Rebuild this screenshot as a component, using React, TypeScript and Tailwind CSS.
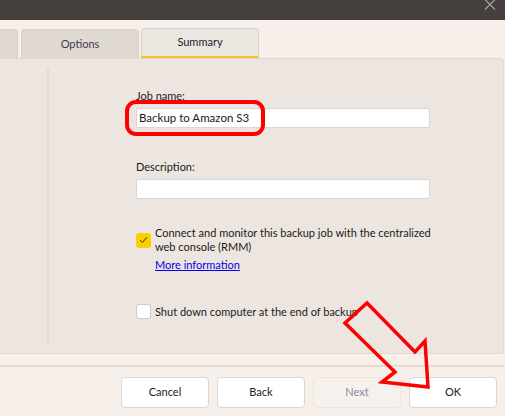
import React from 'react';

const font = { fontFamily: 'Lato, "Noto Sans", sans-serif' };

function Tab({ label, active, className }: { label: string; active?: boolean; className: string }) {
  return (
    <div
      className={`${className} flex items-center justify-center rounded-t-[4px] border border-b-0 text-[11px] ${
        active
          ? 'h-[30px] border-[#d8d2cc] bg-[#ece6e0] text-[#1c1b2e] border-b-2 border-b-[#f5c518]'
          : 'h-[29px] border-[#d6d0ca] bg-[#e0d9d1] text-[#3e3d52]'
      }`}
    >
      {label}
    </div>
  );
}

function Button({ label, disabled }: { label: string; disabled?: boolean }) {
  return (
    <button
      className={`w-[88px] h-[31px] rounded-[4px] border text-[11px] ${
        disabled
          ? 'bg-[#f6f1ec] border-[#ebe6e1] text-[#8b8a9a]'
          : 'bg-white border-[#dcd7d2] text-[#1a1a1a]'
      }`}
    >
      {label}
    </button>
  );
}

export default function App() {
  return (
    <div className="relative w-[505px] h-[416px] overflow-hidden bg-[#f7f0ea] text-[#1a1a1a] flex flex-col" style={font}>
      {/* title bar */}
      <div className="h-[20px] bg-[#45403d] flex justify-end items-start shrink-0">
        <svg width="12" height="11" viewBox="0 0 12 11" className="mr-[9px] -mt-[1px]">
          <path d="M1 0.5 L11 10.5 M11 0.5 L1 10.5" stroke="#a8a4a1" strokeWidth="1.2" />
        </svg>
      </div>

      {/* tabs */}
      <div className="mt-[8px] h-[30px] flex items-end shrink-0">
        <Tab label="" className="w-[18px] border-l-0 rounded-tl-none" />
        <Tab label="Options" className="w-[118px] ml-[3px]" />
        <Tab label="Summary" className="w-[118px] ml-[2px]" active />
      </div>

      {/* panel */}
      <div className="w-[504px] h-[296px] bg-[#ede6e0] border border-l-0 border-[#e0dad4] rounded-r-[4px] flex shrink-0">
        <div className="w-[47px]" />
        <div className="w-[2px] mt-[9px] h-[274px] bg-[#e0dad5]" />
        <div className="flex flex-col pl-[87px] pt-[29px] text-[11px]">
          <div className="leading-[16px]">Job name:</div>
          <div className="mt-[4px] w-[294px] h-[20px] bg-white border border-[#dcd7d2] rounded-[2px] flex items-center px-[2px] text-[11.5px]">
            Backup to Amazon S3
          </div>
          <div className="mt-[31px] leading-[16px]">Description:</div>
          <div className="mt-[4px] w-[294px] h-[20px] bg-white border border-[#dcd7d2] rounded-[2px]" />

          <div className="mt-[27px] flex items-center gap-[4px]">
            <div className="w-[15px] h-[15px] rounded-[3px] bg-[#fcd000] flex items-center justify-center shrink-0">
              <svg width="9" height="8" viewBox="0 0 9 8">
                <path d="M1 4.2 L3.4 6.5 L8 1.2" fill="none" stroke="#3a3200" strokeWidth="1" />
              </svg>
            </div>
            <div className="leading-[14px] w-[285px]">
              Connect and monitor this backup job with the centralized web console (RMM)
            </div>
          </div>
          <a className="mt-[4px] ml-[19px] leading-[14px] text-[#0000f0] underline">More information</a>

          <div className="mt-[32px] flex items-center gap-[4px]">
            <div className="w-[15px] h-[15px] rounded-[3px] bg-white border border-[#cfcac5] shrink-0" />
            <div className="leading-[14px]">Shut down computer at the end of backup</div>
          </div>
        </div>
      </div>

      {/* footer */}
      <div className="mt-[11px] h-[2px] bg-[#e2ddd8] shrink-0" />
      <div className="mt-[10px] flex justify-end gap-[8px] pr-[8px]">
        <Button label="Cancel" />
        <Button label="Back" />
        <Button label="Next" disabled />
        <Button label="OK" />
      </div>

      {/* annotations */}
      <svg className="absolute inset-0 pointer-events-none" width="505" height="416" viewBox="0 0 505 416">
        <rect x="127" y="102" width="136" height="32" rx="9" fill="none" stroke="#ff0000" strokeWidth="4" />
        <polygon
          points="367,303 415,352 425,341 428,387 382,382 395,372 345,323"
          fill="none"
          stroke="#ff0000"
          strokeWidth="3.5"
          strokeLinejoin="miter"
        />
      </svg>
    </div>
  );
}
